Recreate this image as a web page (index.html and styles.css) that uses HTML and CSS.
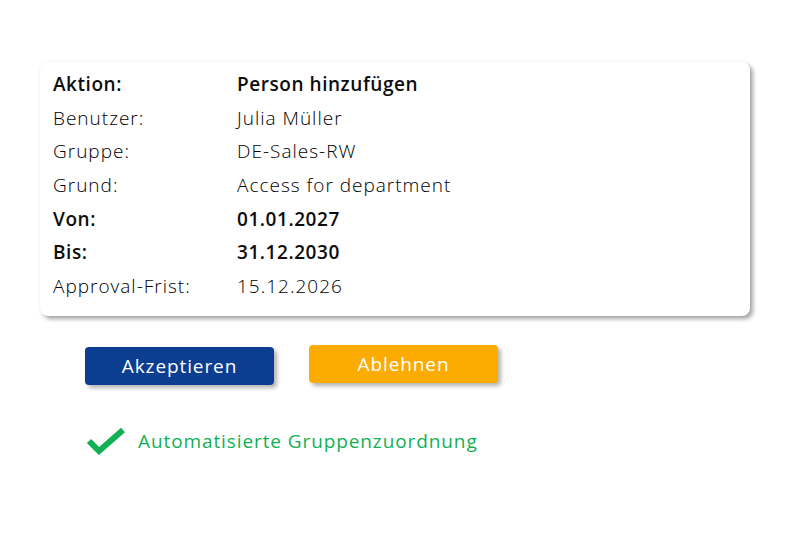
FILE: index.html
```html
<!DOCTYPE html>
<html lang="de">
<head>
<meta charset="utf-8">
<link rel="stylesheet" href="styles.css">
</head>
<body>
<div class="page">
  <div class="card">
    <div class="row strong"><span class="label">Aktion:</span><span class="value">Person hinzufügen</span></div>
    <div class="row"><span class="label">Benutzer:</span><span class="value">Julia Müller</span></div>
    <div class="row"><span class="label">Gruppe:</span><span class="value">DE-Sales-RW</span></div>
    <div class="row"><span class="label">Grund:</span><span class="value">Access for department</span></div>
    <div class="row strong"><span class="label">Von:</span><span class="value">01.01.2027</span></div>
    <div class="row strong"><span class="label">Bis:</span><span class="value">31.12.2030</span></div>
    <div class="row"><span class="label">Approval-Frist:</span><span class="value">15.12.2026</span></div>
  </div>
  <div class="actions">
    <button class="btn accept">Akzeptieren</button>
    <button class="btn reject">Ablehnen</button>
  </div>
  <div class="auto">
    <svg class="check" width="40" height="28" viewBox="0 0 40 28"><path d="M3 14 L13 24 L37 3" fill="none" stroke="#12b054" stroke-width="6"/></svg>
    <span>Automatisierte Gruppenzuordnung</span>
  </div>
</div>
</body>
</html>
```
FILE: styles.css
```css
html, body { margin: 0; padding: 0; background: #fff; }
body { font-family: "Open Sans", "Noto Sans", sans-serif; color: #1a1a1a; }
.page { width: 800px; height: 533px; padding: 62px 0 0 40px; box-sizing: border-box; }
.card {
  width: 710px; height: 254px; box-sizing: border-box;
  background: #fff; border-radius: 8px;
  box-shadow: 3px 3px 4px rgba(0,0,0,0.35), 0 0 3px rgba(0,0,0,0.06);
  padding: 5px 13px 0 13px;
}
.row { display: flex; height: 33.7px; align-items: center; font-size: 19px; font-weight: 300; color: #000; letter-spacing: 1px; }
.row.strong { font-weight: 600; color: #0d0d0d; letter-spacing: 0.55px; }
.label { width: 184px; flex: none; }
.actions { display: flex; align-items: flex-start; gap: 35px; margin: 29px 0 0 45px; }
.btn {
  font-family: inherit; font-size: 19px; color: #fff; border: none; letter-spacing: 0.9px;
  width: 189px; height: 38px; border-radius: 4px; padding: 0;
  box-shadow: 3px 3px 4px rgba(0,0,0,0.3);
}
.accept { background: #0b3d91; margin-top: 2px; }
.reject { background: #fcab00; }
.auto { display: flex; align-items: center; margin: 42px 0 0 46px; color: #12b054; font-size: 19px; letter-spacing: 0.9px; }
.check { margin-right: 12px; }
```
